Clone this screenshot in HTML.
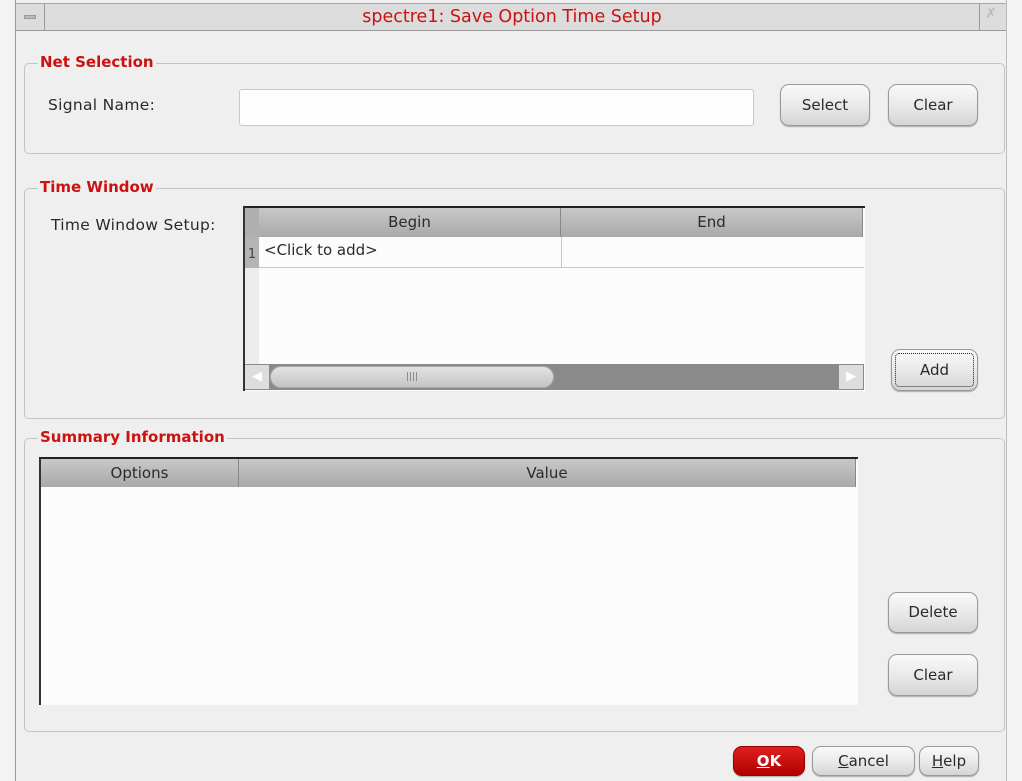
<!DOCTYPE html>
<html><head><meta charset="utf-8"><style>
*{box-sizing:border-box}
body{margin:0;width:1022px;height:781px;background:#f3f3f3;font-family:"DejaVu Sans","Liberation Sans",sans-serif;font-size:15px;color:#2a2a2a;position:relative;overflow:hidden}
.a{position:absolute}
.win{left:15px;top:0;width:992px;height:781px;border-left:1px solid #9a9a9a;border-right:1px solid #bdbdbd;background:#efefef}
.tb{left:16px;top:3px;width:990px;height:28px;background:#dcdcdc;border-top:1px solid #aaa;border-bottom:1px solid #999}
.title{left:44px;top:4px;width:936px;height:26px;text-align:center;color:#cc1111;font-size:17.5px;line-height:26px;border-left:1px solid #999;border-right:1px solid #999}
.grp{border:1px solid #c4c4c4;border-radius:5px}
.lg{color:#cc1111;font-weight:bold;font-size:15px;background:#efefef;padding:0 2px;line-height:18px}
.btn{border:1px solid #999;border-radius:9px;background:linear-gradient(#fafafa,#e6e6e6 60%,#d4d4d4);text-align:center;box-shadow:0 1px 1px #aaa;font-size:15px}
.hdr{background:linear-gradient(#c8c8c8,#a9a9a9);text-align:center;font-size:15px;line-height:28px;color:#2a2a2a}
</style></head><body>
<div class="a win"></div>
<div class="a tb"></div>
<div class="a" style="left:24px;top:15px;width:12px;height:4px;background:#bbb;border:1px solid #999"></div>
<div class="a title">spectre1: Save Option Time Setup</div>
<div class="a" style="left:985px;top:6px;color:#bbb;font-size:14px">&#x2717;</div>

<div class="a grp" style="left:24px;top:63px;width:981px;height:91px"></div>
<div class="a lg" style="left:38px;top:53px">Net Selection</div>
<div class="a" style="left:48px;top:96px;font-size:15.5px;letter-spacing:0.3px">Signal Name:</div>
<div class="a" style="left:239px;top:89px;width:515px;height:37px;background:#fdfdfd;border:1px solid #c8c8c8;border-radius:3px"></div>
<div class="a btn" style="left:780px;top:84px;width:90px;height:42px;line-height:40px">Select</div>
<div class="a btn" style="left:888px;top:84px;width:90px;height:42px;line-height:40px">Clear</div>

<div class="a grp" style="left:24px;top:188px;width:981px;height:231px"></div>
<div class="a lg" style="left:38px;top:178px">Time Window</div>
<div class="a" style="left:51px;top:216px;font-size:15.5px;letter-spacing:0.3px">Time Window Setup:</div>
<div class="a" style="left:243px;top:206px;width:622px;height:185px;background:#fcfcfc;border-top:2px solid #222;border-left:2px solid #333"></div>
<div class="a hdr" style="left:259px;top:208px;width:302px;height:29px;border-right:1px solid #888">Begin</div>
<div class="a hdr" style="left:561px;top:208px;width:302px;height:29px;border-right:1px solid #888">End</div>
<div class="a" style="left:245px;top:208px;width:14px;height:29px;background:#b0b0b0"></div>
<div class="a" style="left:245px;top:237px;width:14px;height:31px;background:#b4b4b4;font-size:13px;line-height:36px;text-align:center;color:#444">1</div>
<div class="a" style="left:245px;top:268px;width:14px;height:96px;background:#ececec"></div>
<div class="a" style="left:259px;top:237px;width:605px;height:31px;border-bottom:1px solid #c8c8c8"></div>
<div class="a" style="left:561px;top:237px;width:1px;height:31px;background:#c8c8c8"></div>
<div class="a" style="left:264px;top:241px">&lt;Click to add&gt;</div>
<div class="a" style="left:245px;top:364px;width:619px;height:26px;background:#8a8a8a"></div>
<div class="a" style="left:245px;top:365px;width:24px;height:24px;background:#ddd;color:#fff;font-size:13px;line-height:24px;text-align:center">&#9664;</div>
<div class="a" style="left:839px;top:365px;width:24px;height:24px;background:#ddd;color:#fff;font-size:13px;line-height:24px;text-align:center">&#9654;</div>
<div class="a" style="left:270px;top:366px;width:284px;height:22px;border-radius:11px;background:linear-gradient(#e2e2e2,#c4c4c4);border:1px solid #aaa;text-align:center;font-size:9px;line-height:20px;color:#777">||||</div>
<div class="a btn" style="left:891px;top:349px;width:87px;height:42px;line-height:40px"><div style="position:absolute;left:3px;top:3px;right:3px;bottom:3px;border:1px dotted #222;border-radius:4px"></div>Add</div>

<div class="a grp" style="left:24px;top:438px;width:981px;height:294px"></div>
<div class="a lg" style="left:38px;top:428px">Summary Information</div>
<div class="a" style="left:39px;top:457px;width:819px;height:248px;background:#fcfcfc;border-top:2px solid #222;border-left:2px solid #333"></div>
<div class="a hdr" style="left:41px;top:459px;width:198px;height:28px;border-right:1px solid #888">Options</div>
<div class="a hdr" style="left:239px;top:459px;width:617px;height:28px;border-right:1px solid #888">Value</div>
<div class="a btn" style="left:888px;top:592px;width:90px;height:41px;line-height:39px">Delete</div>
<div class="a btn" style="left:888px;top:654px;width:90px;height:42px;line-height:40px">Clear</div>

<div class="a btn" style="left:733px;top:746px;width:72px;height:30px;line-height:28px;background:linear-gradient(#e02020,#b00000);color:#fff;font-weight:bold;border-color:#900"><u>O</u>K</div>
<div class="a btn" style="left:812px;top:746px;width:103px;height:30px;line-height:28px"><u>C</u>ancel</div>
<div class="a btn" style="left:919px;top:746px;width:60px;height:30px;line-height:28px"><u>H</u>elp</div>
</body></html>
